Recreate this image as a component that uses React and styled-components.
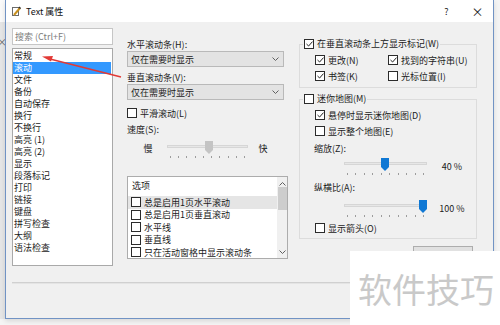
import styled, { createGlobalStyle } from "styled-components"

const GlobalStyle = createGlobalStyle`
  html, body {
    margin: 0;
    padding: 0;
    background: #f4f4f4;
  }
  body {
    font-family: "Noto Sans CJK SC", "Liberation Sans", sans-serif;
    font-size: 9px;
    color: #1b1b1b;
  }
`

const Page = styled.div`
  position: relative;
  width: 500px;
  height: 325px;
  overflow: hidden;
  display: flex;
  align-items: flex-start;
`

const BehindStrip = styled.div`
  width: 5px;
  height: 319px;
  display: flex;
  flex-direction: column;
  overflow: hidden;
`

const BehindTop = styled.div`
  height: 22px;
  background: #fafafa;
`

const BehindBody = styled.div`
  flex: 1;
  background: #e6e6e6;
  padding-top: 12px;
  font-size: 10px;
  color: #666;
  text-indent: -3px;
  white-space: nowrap;
`

const Dialog = styled.div`
  width: 487px;
  height: 318px;
  border: 1px solid #7193c4;
  border-top: none;
  background: #f0f0f0;
  display: flex;
  flex-direction: column;
  box-shadow: 0 2px 5px rgba(0, 0, 0, 0.12);
`

const TitleBar = styled.div`
  height: 22px;
  flex: none;
  background: #fff;
  display: flex;
  align-items: center;
  padding-left: 6px;
`

const TitleText = styled.span`
  margin-left: 5px;
  font-size: 9px;
  color: #111;
  flex: 1;
`

const CaptionButton = styled.span`
  width: 31px;
  text-align: center;
  font-size: ${p => p.$big ? "12px" : "9px"};
  color: #222;
`

const Body = styled.div`
  flex: 1;
  display: flex;
  flex-direction: column;
  padding: 6px 6px 0 6px;
`

const Columns = styled.div`
  display: flex;
  align-items: flex-start;
`

const Column = styled.div`
  width: ${p => p.$w}px;
  margin-left: ${p => p.$gap || 0}px;
  padding-top: ${p => p.$top || 0}px;
  display: flex;
  flex-direction: column;
`

const SearchBox = styled.div`
  height: 17px;
  box-sizing: border-box;
  border: 1px solid #c6c6c6;
  background: #fff;
  color: #7d7d7d;
  line-height: 15px;
  padding-left: 2px;
`

const ListBox = styled.div`
  margin-top: 3px;
  height: 218px;
  box-sizing: border-box;
  border: 1px solid #a9a9a9;
  background: #fff;
  padding-top: 1px;
`

const ListItem = styled.div`
  height: 12px;
  line-height: 12px;
  padding-left: 1px;
  margin-right: 1px;
  background: ${p => p.$selected ? "#3399ff" : "transparent"};
  color: ${p => p.$selected ? "#fff" : "#1b1b1b"};
`

const FieldLabel = styled.div`
  line-height: 12px;
  margin-top: ${p => p.$mt || 0}px;
`

const Combo = styled.div`
  width: 157px;
  height: 16px;
  box-sizing: border-box;
  border: 1px solid #b9b9b9;
  background: #e3e3e3;
  display: flex;
  align-items: center;
  justify-content: space-between;
  padding: 0 4px 0 3px;
`

const CheckRow = styled.div`
  display: flex;
  align-items: center;
  gap: 3px;
  height: ${p => p.$h || 12}px;
  margin-top: ${p => p.$mt || 0}px;
  padding-left: ${p => p.$pl || 0}px;
  background: ${p => p.$hover ? "#e5e5e5" : "transparent"};
`

const Box = styled.span`
  width: 8px;
  height: 8px;
  flex: none;
  border: 1px solid #2b2b2b;
  background: #fff;
  display: flex;
  align-items: center;
  justify-content: center;
`

const SliderRow = styled.div`
  display: flex;
  align-items: flex-start;
  margin-top: ${p => p.$mt || 0}px;
  padding-left: ${p => p.$pl || 0}px;
`

const EndLabel = styled.span`
  width: ${p => p.$w}px;
  text-align: center;
  line-height: 12px;
  margin-top: ${p => p.$mt || 0}px;
`

const Track = styled.div`
  position: relative;
  width: ${p => p.$w}px;
  height: 20px;
  margin: 0 ${p => p.$mr || 0}px 0 ${p => p.$ml || 0}px;
  padding-top: 4px;
  box-sizing: border-box;
`

const Rail = styled.div`
  height: 3px;
  box-sizing: border-box;
  background: #e7e7e7;
  border: 1px solid #d6d6d6;
`

const Ticks = styled.div`
  display: flex;
  justify-content: space-between;
  margin-top: 8px;
  padding: 0 3px;
`

const Tick = styled.span`
  width: 1px;
  height: 2px;
  background: #9c9c9c;
`

const Thumb = styled.svg`
  position: absolute;
  top: 0;
`

const OptionsBox = styled.div`
  margin-top: 15px;
  height: 83px;
  box-sizing: border-box;
  border: 1px solid #acacac;
  background: #fff;
  display: flex;
`

const OptionsList = styled.div`
  flex: 1;
  padding-top: 3px;
`

const OptionsHead = styled.div`
  line-height: 12px;
  padding-left: 4px;
  margin-bottom: 4px;
`

const ScrollBar = styled.div`
  width: 10px;
  background: #f0f0f0;
  display: flex;
  flex-direction: column;
  align-items: center;
  padding: 5px 0 4px;
`

const ScrollThumb = styled.div`
  width: 9px;
  height: 23px;
  background: #cdcdcd;
  margin-top: 1px;
`

const ScrollGap = styled.div`
  flex: 1;
`

const Group = styled.fieldset`
  margin: ${p => p.$mt || 0}px 0 0 0;
  padding: 0;
  border: 1px solid #dcdcdc;
  min-width: 0;
`

const Legend = styled.legend`
  margin-left: 3px;
  padding: 0 1px;
  line-height: 12px;
  display: flex;
  align-items: center;
  gap: 2px;
`

const GroupInner = styled.div`
  padding: ${p => p.$pt || 0}px 0 ${p => p.$pb || 0}px 14px;
  display: flex;
  flex-direction: column;
`

const CheckGrid = styled.div`
  display: grid;
  grid-template-columns: 73px 1fr;
  padding-left: 1px;
`

const PushButton = styled.div`
  align-self: flex-end;
  margin: 7px 4px 0 0;
  width: 60px;
  height: 20px;
  box-sizing: border-box;
  border: 1px solid #adadad;
  background: #e1e1e1;
  text-align: center;
  line-height: 18px;
`

const Separator = styled.div`
  margin-top: 16px;
  height: 1px;
  background: #d0d0d0;
  border-bottom: 1px solid #e4e4e4;
`

const Watermark = styled.div`
  position: absolute;
  left: 350px;
  top: 251px;
  right: 0;
  bottom: 0;
  background: #fff;
  display: flex;
  align-items: center;
  padding-left: 8px;
  font-size: 34px;
  color: #c9c9c9;
  letter-spacing: 0;
`

const ArrowLayer = styled.svg`
  position: absolute;
  left: 0;
  top: 0;
  pointer-events: none;
`

const Check = ({ on, label, ...rest }) => (
  <CheckRow {...rest}>
    <Box>
      {on && (
        <svg width="7" height="6" viewBox="0 0 7 6">
          <path d="M0.5 3 L2.6 5 L6.5 0.6" fill="none" stroke="#222" strokeWidth="1" />
        </svg>
      )}
    </Box>
    <span>{label}</span>
  </CheckRow>
)

const Chevron = ({ up }) => (
  <svg width="7" height="4" viewBox="0 0 7 4">
    <path d={up ? "M0.5 3.5 L3.5 0.5 L6.5 3.5" : "M0.5 0.5 L3.5 3.5 L6.5 0.5"} fill="none" stroke="#606060" strokeWidth="1" />
  </svg>
)

const Slider = ({ width, at, color, ml, mr }) => (
  <Track $w={width} $ml={ml} $mr={mr}>
    <Rail />
    <Ticks>
      {Array.from({ length: 10 }).map((_, i) => <Tick key={i} />)}
    </Ticks>
    <Thumb width="8" height="13" viewBox="0 0 8 13" style={{ left: at }}>
      <path d="M0 0 H8 V9 L4 13 L0 9 Z" fill={color} />
    </Thumb>
  </Track>
)

const categories = [
  "常规", "滚动", "文件", "备份", "自动保存", "换行", "不换行", "高亮 (1)",
  "高亮 (2)", "显示", "段落标记", "打印", "链接", "键盘", "拼写检查", "大纲", "语法检查",
]

const options = [
  "总是启用1页水平滚动",
  "总是启用1页垂直滚动",
  "水平线",
  "垂直线",
  "只在活动窗格中显示滚动条",
]

export default function App () {
  return (
    <>
      <GlobalStyle />
      <Page>
        <BehindStrip>
          <BehindTop />
          <BehindBody>×</BehindBody>
        </BehindStrip>
        <Dialog>
          <TitleBar>
            <svg width="9" height="10" viewBox="0 0 9 10">
              <rect x="0.5" y="1.5" width="6" height="8" fill="#fff" stroke="#6b6b6b" />
              <path d="M2 9 L8 2" stroke="#c8901e" strokeWidth="2" />
              <path d="M7 1 L8.6 2.6" stroke="#333" strokeWidth="1.4" />
            </svg>
            <TitleText>Text 属性</TitleText>
            <CaptionButton>?</CaptionButton>
            <CaptionButton $big>×</CaptionButton>
          </TitleBar>
          <Body>
            <Columns>
              <Column $w={101}>
                <SearchBox>搜索 (Ctrl+F)</SearchBox>
                <ListBox>
                  {categories.map(c => (
                    <ListItem key={c} $selected={c === "滚动"}>{c}</ListItem>
                  ))}
                </ListBox>
              </Column>

              <Column $w={161} $gap={14} $top={11}>
                <FieldLabel>水平滚动条(H):</FieldLabel>
                <Combo>
                  <span>仅在需要时显示</span>
                  <Chevron />
                </Combo>
                <FieldLabel $mt={5}>垂直滚动条(V):</FieldLabel>
                <Combo>
                  <span>仅在需要时显示</span>
                  <Chevron />
                </Combo>
                <Check $mt={7} label="平滑滚动(L)" />
                <FieldLabel $mt={5}>速度(S):</FieldLabel>
                <SliderRow $mt={5} $pl={16}>
                  <EndLabel $w={10} $mt={2}>慢</EndLabel>
                  <Slider width={81} at={38} color="#c4c4c4" ml={14} mr={10} />
                  <EndLabel $w={10} $mt={2}>快</EndLabel>
                </SliderRow>
                <OptionsBox>
                  <OptionsList>
                    <OptionsHead>选项</OptionsHead>
                    {options.map((o, i) => (
                      <Check key={o} label={o} $h={12.5} $pl={3} $hover={i === 0} />
                    ))}
                  </OptionsList>
                  <ScrollBar>
                    <Chevron up />
                    <ScrollThumb />
                    <ScrollGap />
                    <Chevron />
                  </ScrollBar>
                </OptionsBox>
              </Column>

              <Column $w={178} $gap={11} $top={10}>
                <Group>
                  <Legend>
                    <Check on label="在垂直滚动条上方显示标记(W)" />
                  </Legend>
                  <GroupInner $pt={2} $pb={3}>
                    <CheckGrid>
                      <Check on $h={16} label="更改(N)" />
                      <Check on $h={16} label="找到的字符串(U)" />
                      <Check on $h={16} label="书签(K)" />
                      <Check $h={16} label="光标位置(I)" />
                    </CheckGrid>
                  </GroupInner>
                </Group>
                <Group $mt={5}>
                  <Legend>
                    <Check label="迷你地图(M)" />
                  </Legend>
                  <GroupInner $pt={2} $pb={2}>
                    <Check on $h={16} $pl={1} label="悬停时显示迷你地图(D)" />
                    <Check $h={16} $pl={1} label="显示整个地图(E)" />
                    <FieldLabel $mt={4}>缩放(Z):</FieldLabel>
                    <SliderRow $mt={3}>
                      <Slider width={83} at={37} color="#0f78d4" ml={30} mr={10} />
                      <EndLabel $w={30} $mt={3}>40 %</EndLabel>
                    </SliderRow>
                    <FieldLabel $mt={4}>纵横比(A):</FieldLabel>
                    <SliderRow $mt={6}>
                      <Slider width={83} at={75} color="#0f78d4" ml={30} mr={10} />
                      <EndLabel $w={30} $mt={3}>100 %</EndLabel>
                    </SliderRow>
                    <Check $h={16} $pl={1} label="显示箭头(O)" />
                  </GroupInner>
                </Group>
                <PushButton>默认值</PushButton>
              </Column>
            </Columns>
            <Separator />
          </Body>
        </Dialog>

        <ArrowLayer width="500" height="325" viewBox="0 0 500 325">
          <path d="M121 77 L50 59" stroke="#e23a36" strokeWidth="1.4" fill="none" />
          <path d="M42 56.5 L53 56 L51 61.5 Z" fill="#e23a36" />
        </ArrowLayer>
        <Watermark>软件技巧</Watermark>
      </Page>
    </>
  )
}
